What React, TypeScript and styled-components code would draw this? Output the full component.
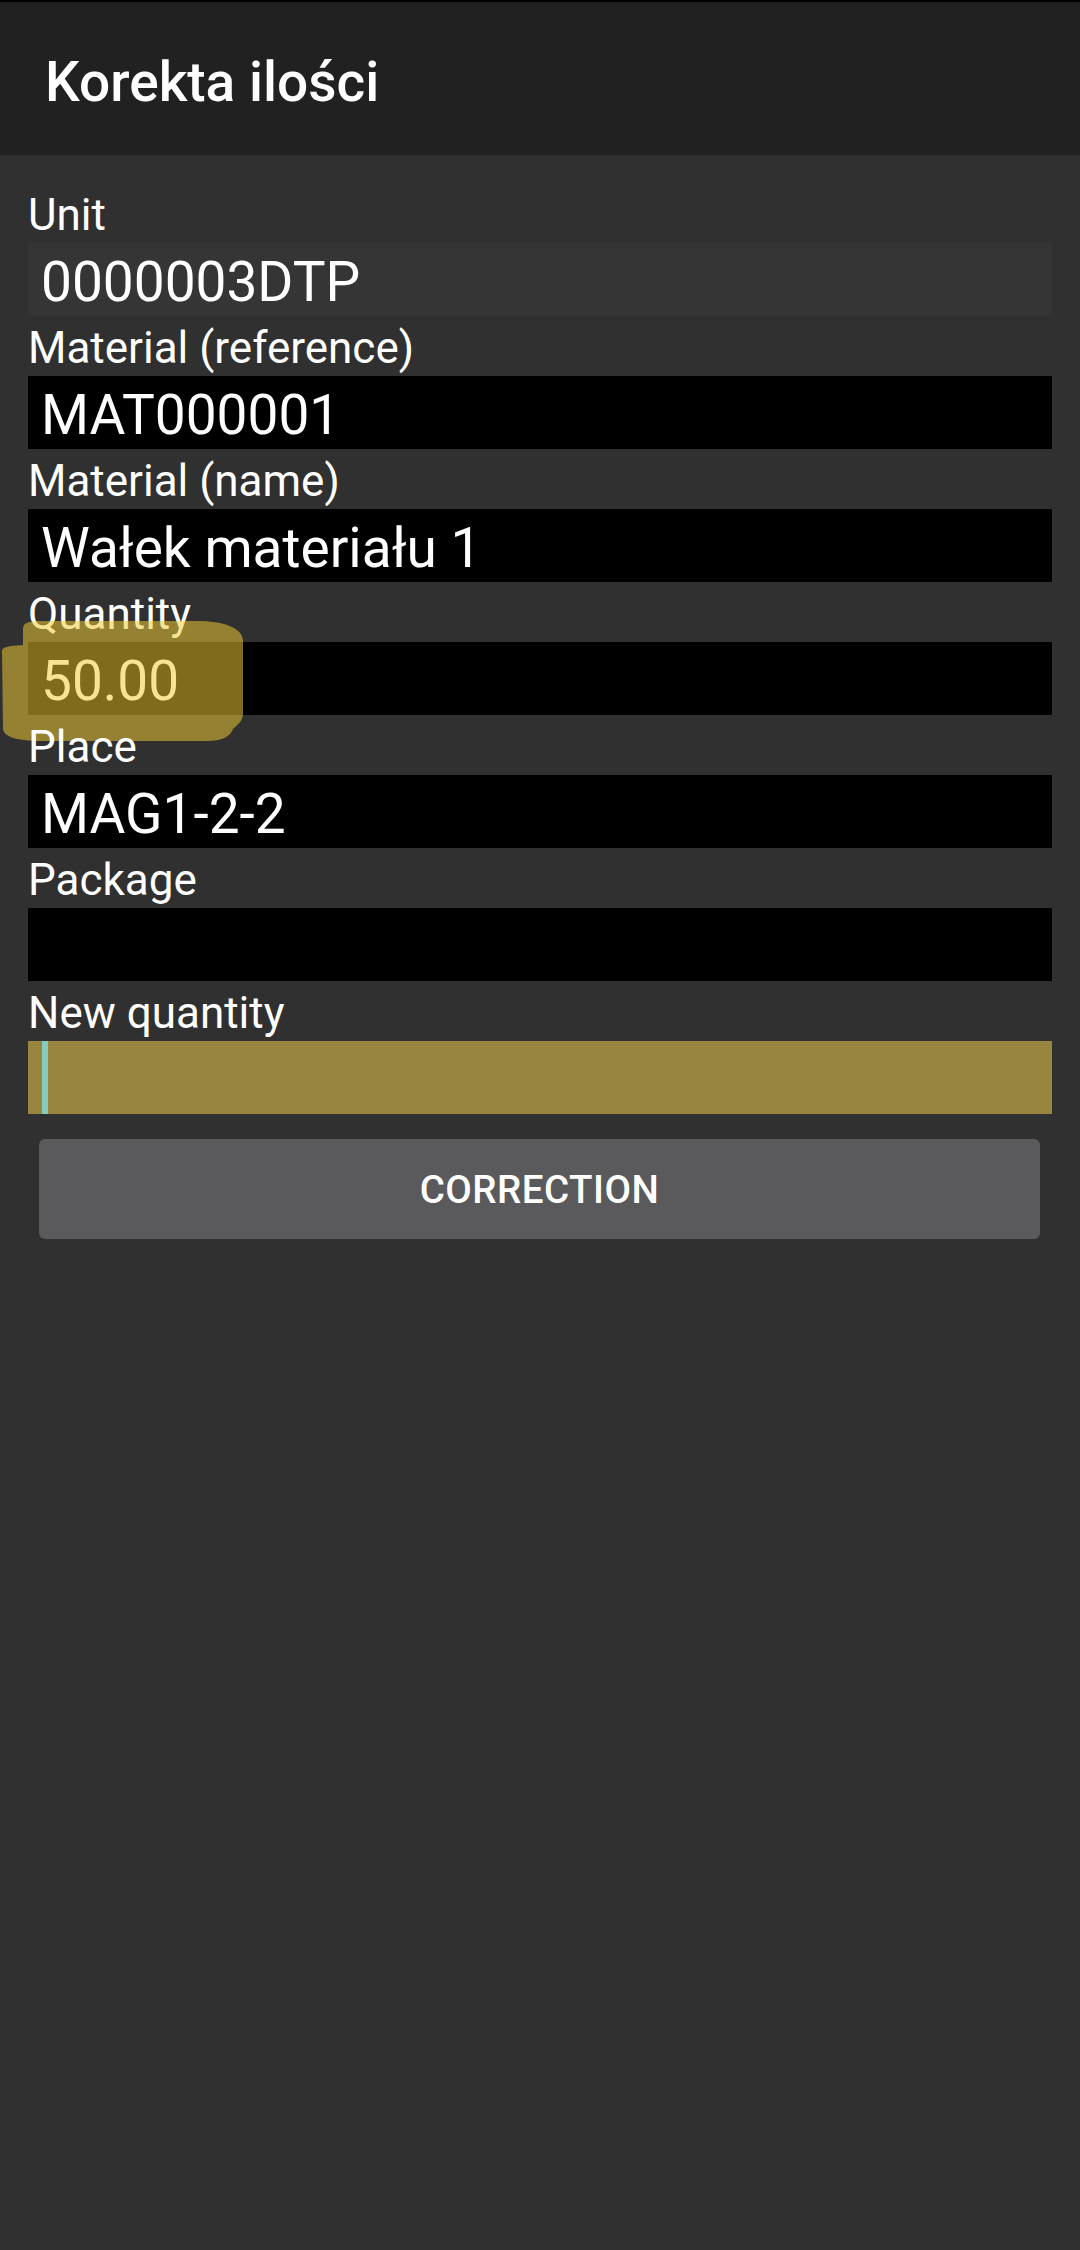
import React from "react";
import styled, { createGlobalStyle } from "styled-components";

const GlobalStyle = createGlobalStyle`
  html, body {
    margin: 0;
    padding: 0;
    background: #303030;
  }
  body {
    font-family: Roboto, "Noto Sans", "Liberation Sans", sans-serif;
    color: #ffffff;
  }
`;

type FieldKind = "readonly" | "output" | "focused";

const field_colors: Record<FieldKind, string> = {
  readonly: "#353535",
  output: "#000000",
  focused: "#988540",
};

const rows: { label: string; value: string; kind: FieldKind; marked?: boolean }[] = [
  { label: "Unit", value: "0000003DTP", kind: "readonly" },
  { label: "Material (reference)", value: "MAT000001", kind: "output" },
  { label: "Material (name)", value: "Wałek materiału 1", kind: "output" },
  { label: "Quantity", value: "50.00", kind: "output", marked: true },
  { label: "Place", value: "MAG1-2-2", kind: "output" },
  { label: "Package", value: "", kind: "output" },
];

function HighlightMark() {
  return (
    <Marker viewBox="0 0 245 122" width="245" height="122">
      <path
        d="M21 8 C21 2 26 0 40 0 L200 0 C225 1 241 8 241 20 L241 93 C241 100 235 104 231 108 C228 116 220 120 205 120 L40 120 C15 120 2 116 1 108 L0 30 C0 26 6 25 21 24 Z"
        fill="rgba(238, 202, 53, 0.53)"
      />
    </Marker>
  );
}

export default function App() {
  return (
    <Screen>
      <GlobalStyle />
      <Header>
        <Title>Korekta ilości</Title>
      </Header>
      <Form>
        {rows.map((row) => (
          <Row key={row.label}>
            <Label>{row.label}</Label>
            <Field kind={row.kind}>{row.value}</Field>
            {row.marked && <HighlightMark />}
          </Row>
        ))}
        <Row>
          <Label>New quantity</Label>
          <Field kind="focused">
            <Cursor />
          </Field>
        </Row>
        <ActionButton>CORRECTION</ActionButton>
      </Form>
    </Screen>
  );
}

const Screen = styled.div`
  min-height: 2250px;
  background: #303030;
`;

const Header = styled.header`
  box-sizing: border-box;
  height: 155px;
  background: #212121;
  border-top: 2px solid #000000;
  padding: 48px 0 0 45px;
`;

const Title = styled.h1`
  margin: 0;
  font-size: 55px;
  line-height: 64px;
  font-weight: 500;
  color: #ffffff;
`;

const Form = styled.main`
  display: flex;
  flex-direction: column;
  padding: 32px 28px 0 28px;
`;

const Row = styled.div`
  position: relative;
  display: flex;
  flex-direction: column;
`;

const Label = styled.div`
  font-size: 44px;
  line-height: 56px;
  color: #ffffff;
`;

const Field = styled.div<{ kind: FieldKind }>`
  position: relative;
  box-sizing: border-box;
  height: 73px;
  margin-bottom: 4px;
  padding: 6px 13px 0 13px;
  font-size: 55px;
  line-height: 67px;
  color: #ffffff;
  white-space: nowrap;
  background: ${(p) => field_colors[p.kind]};
`;

const Cursor = styled.span`
  position: absolute;
  left: 14px;
  top: 0;
  bottom: 0;
  width: 6px;
  background: #86cbc0;
`;

const Marker = styled.svg`
  position: absolute;
  left: -26px;
  top: 35px;
  pointer-events: none;
`;

const ActionButton = styled.button`
  height: 100px;
  margin: 21px 12px 0 11px;
  border: none;
  border-radius: 6px;
  background: #5a5a5c;
  color: #ffffff;
  font-family: Roboto, "Noto Sans", "Liberation Sans", sans-serif;
  font-size: 38.5px;
  font-weight: 500;
  letter-spacing: 0.5px;
`;
